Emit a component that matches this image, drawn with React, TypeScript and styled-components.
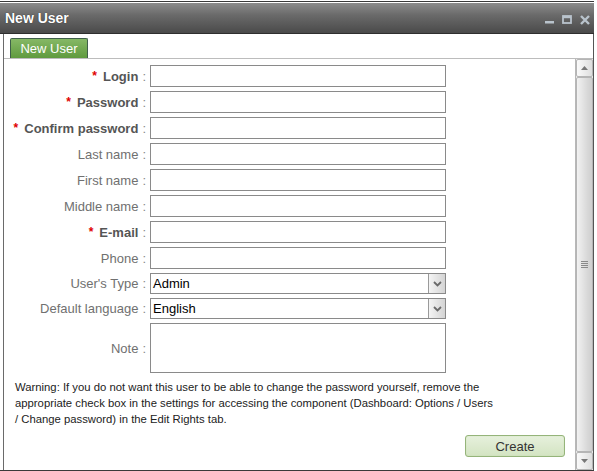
import styled, { createGlobalStyle } from 'styled-components';

const GlobalStyle = createGlobalStyle`
  html, body {
    margin: 0;
    padding: 0;
    background: #ffffff;
  }
  body {
    font-family: "Liberation Sans", Arial, sans-serif;
  }
`;

const Window = styled.div`
  width: 594px;
  height: 467px;
  margin-top: 1px;
  border-top: 1px solid #3a3a3a;
  border-bottom: 1px solid #3a3a3a;
  padding-top: 1px;
  display: flex;
  flex-direction: column;
  background: #fff;
`;

const TitleBar = styled.div`
  height: 30px;
  flex: none;
  display: flex;
  align-items: center;
  justify-content: space-between;
  padding: 0 4px 0 5px;
  background: linear-gradient(#8c8c8c 0%, #6a6a6a 40%, #4a4a4a 100%);
  border-bottom: 1px solid #2e2e2e;
`;

const Title = styled.span`
  color: #fff;
  font-weight: bold;
  font-size: 14px;
  text-shadow: 0 0 1px #222;
`;

const Controls = styled.div`
  display: flex;
  align-items: center;
  gap: 8px;
  padding-top: 3px;
`;

const Body = styled.div`
  flex: 1;
  display: flex;
  flex-direction: column;
  margin-left: 3px;
  border-left: 1px solid #6a6a6a;
  border-right: 1px solid #555;
  min-height: 0;
`;

const TabStrip = styled.div`
  height: 24px;
  flex: none;
  display: flex;
  align-items: flex-end;
  padding-left: 6px;
  border-bottom: 1px solid #bcbcbc;
`;

const Tab = styled.div`
  width: 76px;
  height: 19px;
  display: flex;
  align-items: center;
  justify-content: center;
  color: #fff;
  font-size: 13px;
  background: linear-gradient(#86b866, #5f9a3e);
  border: 1px solid #3f5f4a;
  border-bottom: none;
  border-radius: 2px 2px 0 0;
`;

const Main = styled.div`
  flex: 1;
  display: flex;
  min-height: 0;
`;

const Content = styled.div`
  flex: 1;
  display: flex;
  flex-direction: column;
`;

const Form = styled.div`
  display: grid;
  grid-template-columns: 142px 296px;
  column-gap: 4px;
  row-gap: 4px;
  padding-top: 6px;
`;

const Label = styled.div<{ $required?: boolean }>`
  display: flex;
  align-items: center;
  justify-content: flex-end;
  font-size: 13px;
  color: ${(p) => (p.$required ? '#555' : '#707070')};
  font-weight: ${(p) => (p.$required ? 'bold' : 'normal')};
  white-space: nowrap;
`;

const Star = styled.span`
  color: #e00000;
  font-weight: bold;
  margin-right: 6px;
  font-size: 12px;
`;

const Colon = styled.span`
  margin-left: 4px;
  font-weight: normal;
  color: #888;
`;

const Input = styled.div<{ $tall?: boolean }>`
  box-sizing: border-box;
  height: ${(p) => (p.$tall ? '50px' : '22px')};
  border: 1px solid #8a8a8a;
  background: #fff;
`;

const Select = styled.div`
  box-sizing: border-box;
  height: 21px;
  border: 1px solid #8a8a8a;
  display: flex;
  align-items: center;
  background: #fff;
`;

const SelectValue = styled.span`
  flex: 1;
  padding-left: 2px;
  font-size: 13px;
  color: #000;
`;

const SelectButton = styled.div`
  width: 16px;
  height: 19px;
  display: flex;
  align-items: center;
  justify-content: center;
  border-left: 1px solid #9a9a9a;
  background: linear-gradient(90deg, #f4f4f4, #d4d4d4);
`;

const Warning = styled.p`
  margin: 6px 0 0 11px;
  width: 500px;
  font-size: 11.3px;
  line-height: 16px;
  color: #222;
`;

const Footer = styled.div`
  display: flex;
  justify-content: flex-end;
  padding: 8px 10px 0 0;
`;

const Button = styled.button`
  width: 100px;
  height: 22px;
  font-family: "Liberation Sans", Arial, sans-serif;
  font-size: 13px;
  color: #333;
  background: linear-gradient(#e6f0dc, #d3e4c2);
  border: 1px solid #95b47a;
  border-radius: 3px;
  box-shadow: inset 0 0 1px #b9d59a;
  padding: 0;
`;

const Scrollbar = styled.div`
  width: 17px;
  flex: none;
  display: flex;
  flex-direction: column;
  border-left: 1px solid #b8b8b8;
  background: #eee;
`;

const ArrowButton = styled.div`
  height: 16px;
  flex: none;
  display: flex;
  align-items: center;
  justify-content: center;
  border: 1px solid #b5b5b5;
  border-radius: 2px;
  background: linear-gradient(90deg, #fafafa, #dedede);
`;

const Thumb = styled.div`
  flex: 1;
  display: flex;
  align-items: center;
  justify-content: center;
  border: 1px solid #b5b5b5;
  border-radius: 2px;
  background: linear-gradient(90deg, #f2f2f2, #d8d8d8 70%, #cfcfcf);
`;

const Grip = styled.div`
  width: 7px;
  height: 8px;
  background: repeating-linear-gradient(#8a8a8a 0 1px, transparent 1px 2px);
`;

type Field = { label: string; required?: boolean; kind?: 'select' | 'note'; value?: string };

const fields: Field[] = [
  { label: 'Login', required: true },
  { label: 'Password', required: true },
  { label: 'Confirm password', required: true },
  { label: 'Last name' },
  { label: 'First name' },
  { label: 'Middle name' },
  { label: 'E-mail', required: true },
  { label: 'Phone' },
  { label: "User's Type", kind: 'select', value: 'Admin' },
  { label: 'Default language', kind: 'select', value: 'English' },
  { label: 'Note', kind: 'note' },
];

const warningText =
  'Warning: If you do not want this user to be able to change the password yourself, remove the ' +
  'appropriate check box in the settings for accessing the component (Dashboard: Options / Users ' +
  '/\u00a0Change password) in the Edit Rights tab.';

const Chevron = () => (
  <svg width="9" height="6" viewBox="0 0 9 6">
    <path d="M1 1l3.5 3.5L8 1" fill="none" stroke="#6a6a6a" strokeWidth="1.8" />
  </svg>
);

const App = () => {
  return (
    <>
      <GlobalStyle />
      <Window>
        <TitleBar>
          <Title>New User</Title>
          <Controls>
            <svg width="9" height="9" viewBox="0 0 9 9">
              <rect x="0" y="6" width="9" height="2.5" fill="#b9c3cc" />
            </svg>
            <svg width="10" height="9" viewBox="0 0 10 9">
              <rect x="1" y="1" width="8" height="7" fill="none" stroke="#b9c3cc" strokeWidth="1.8" />
              <rect x="1" y="1" width="8" height="2.2" fill="#b9c3cc" />
            </svg>
            <svg width="10" height="10" viewBox="0 0 10 10">
              <path d="M1 1l8 8M9 1l-8 8" stroke="#b9c3cc" strokeWidth="2.4" />
            </svg>
          </Controls>
        </TitleBar>
        <Body>
          <TabStrip>
            <Tab>New User</Tab>
          </TabStrip>
          <Main>
            <Content>
              <Form>
                {fields.map((f) => (
                  <FieldRow key={f.label} field={f} />
                ))}
              </Form>
              <Warning>{warningText}</Warning>
              <Footer>
                <Button>Create</Button>
              </Footer>
            </Content>
            <Scrollbar>
              <ArrowButton>
                <svg width="7" height="4" viewBox="0 0 7 4">
                  <path d="M0 4L3.5 0L7 4z" fill="#777" />
                </svg>
              </ArrowButton>
              <Thumb>
                <Grip />
              </Thumb>
              <ArrowButton>
                <svg width="7" height="4" viewBox="0 0 7 4">
                  <path d="M0 0L3.5 4L7 0z" fill="#777" />
                </svg>
              </ArrowButton>
            </Scrollbar>
          </Main>
        </Body>
      </Window>
    </>
  );
};

const FieldRow = ({ field }: { field: Field }) => (
  <>
    <Label $required={field.required}>
      {field.required && <Star>*</Star>}
      {field.label}
      <Colon>:</Colon>
    </Label>
    {field.kind === 'select' ? (
      <Select>
        <SelectValue>{field.value}</SelectValue>
        <SelectButton>
          <Chevron />
        </SelectButton>
      </Select>
    ) : (
      <Input $tall={field.kind === 'note'} />
    )}
  </>
);

export default App;
